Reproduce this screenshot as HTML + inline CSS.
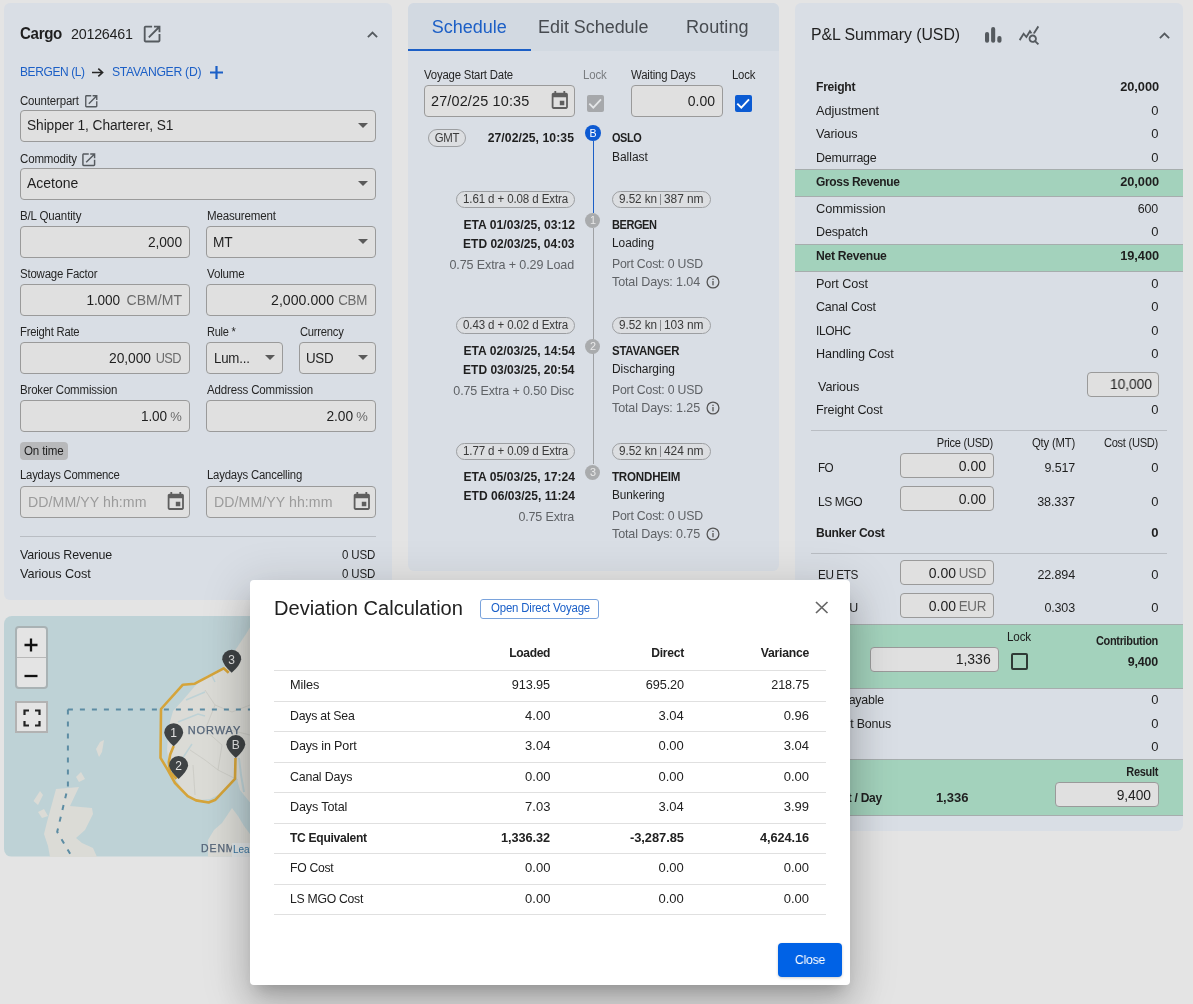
<!DOCTYPE html>
<html><head><meta charset="utf-8"><title>Voyage</title>
<style>
html,body{margin:0;padding:0;}
body{width:1193px;height:1004px;position:relative;overflow:hidden;background:#e4e4e4;font-family:'Liberation Sans', sans-serif;color:#1f1f1f;}
svg{display:block;}
</style></head><body><div style="position:absolute;left:0;top:0;width:1193px;height:1004px;will-change:transform;">
<div style="position:absolute;left:4px;top:3px;width:388px;height:597px;background:#d9dee5;border-radius:6px;"></div>
<div style="position:absolute;left:20px;top:25.50px;height:16px;line-height:16px;white-space:nowrap;font-size:16px;font-weight:700;color:#1f1f1f;letter-spacing:-0.349px;transform:scaleX(0.9440);transform-origin:0 50%;">Cargo</div>
<div style="position:absolute;left:71px;top:26.00px;height:15px;line-height:15px;white-space:nowrap;font-size:15px;font-weight:400;color:#1f1f1f;letter-spacing:-0.258px;transform:scaleX(0.9539);transform-origin:0 50%;">20126461</div>
<svg style="position:absolute;left:141.225px;top:23.225px;" width="22.2" height="22.2" viewBox="0 0 24 24"><path fill="#555a5f" d="M19 19H5V5h7V3H5c-1.11 0-2 .9-2 2v14c0 1.1.89 2 2 2h14c1.1 0 2-.9 2-2v-7h-2v7zM14 3v2h3.59l-9.83 9.83 1.41 1.41L19 6.41V10h2V3h-7z"/></svg>
<svg style="position:absolute;left:367px;top:31px;" width="11" height="7" viewBox="0 0 11 7"><path d="M0.9 6.2 L5.5 1.6 L10.1 6.2" fill="none" stroke="#555a5f" stroke-width="1.8"/></svg>
<div style="position:absolute;left:20px;top:65.30px;height:13px;line-height:13px;white-space:nowrap;font-size:13px;font-weight:400;color:#1c5fc6;letter-spacing:-0.405px;transform:scaleX(0.9196);transform-origin:0 50%;">BERGEN (L)</div>
<svg style="position:absolute;left:92px;top:68.4px;" width="12" height="9" viewBox="0 0 12 9"><path d="M0 4.5 H10.5 M6.3 0.6 L10.6 4.5 L6.3 8.4" fill="none" stroke="#262626" stroke-width="1.6"/></svg>
<div style="position:absolute;left:111.5px;top:64.80px;height:13px;line-height:13px;white-space:nowrap;font-size:13px;font-weight:400;color:#1c5fc6;letter-spacing:-0.309px;transform:scaleX(0.9396);transform-origin:0 50%;">STAVANGER (D)</div>
<svg style="position:absolute;left:209.8px;top:66.4px;" width="13" height="13" viewBox="0 0 13 13"><path d="M6.5 0 V13 M0 6.5 H13" stroke="#1c5fc6" stroke-width="2.2"/></svg>
<div style="position:absolute;left:20px;top:94.80px;height:12px;line-height:12px;white-space:nowrap;font-size:12px;font-weight:400;color:#262626;letter-spacing:-0.170px;transform:scaleX(0.9560);transform-origin:0 50%;">Counterpart</div>
<svg style="position:absolute;left:82.9375px;top:92.5375px;" width="16.5" height="16.5" viewBox="0 0 24 24"><path fill="#555a5f" d="M19 19H5V5h7V3H5c-1.11 0-2 .9-2 2v14c0 1.1.89 2 2 2h14c1.1 0 2-.9 2-2v-7h-2v7zM14 3v2h3.59l-9.83 9.83 1.41 1.41L19 6.41V10h2V3h-7z"/></svg>
<div style="position:absolute;left:20px;top:110px;width:356px;height:32px;background:#e0e0e0;border:1px solid #9a9a9a;border-radius:4px;box-sizing:border-box;"></div>
<div style="position:absolute;left:27.2px;top:118.40px;height:14px;line-height:14px;white-space:nowrap;font-size:14px;font-weight:400;color:#1f1f1f;letter-spacing:-0.079px;transform:scaleX(0.9813);transform-origin:0 50%;">Shipper 1, Charterer, S1</div>
<svg style="position:absolute;left:358px;top:123px;" width="10" height="5" viewBox="0 0 10 5"><path d="M0 0 L10 0 L5 5 Z" fill="#5a5a5a"/></svg>
<div style="position:absolute;left:20px;top:152.90px;height:12px;line-height:12px;white-space:nowrap;font-size:12px;font-weight:400;color:#262626;letter-spacing:-0.176px;transform:scaleX(0.9611);transform-origin:0 50%;">Commodity</div>
<svg style="position:absolute;left:80.4125px;top:150.8125px;" width="17.5" height="17.5" viewBox="0 0 24 24"><path fill="#555a5f" d="M19 19H5V5h7V3H5c-1.11 0-2 .9-2 2v14c0 1.1.89 2 2 2h14c1.1 0 2-.9 2-2v-7h-2v7zM14 3v2h3.59l-9.83 9.83 1.41 1.41L19 6.41V10h2V3h-7z"/></svg>
<div style="position:absolute;left:20px;top:168px;width:356px;height:32px;background:#e0e0e0;border:1px solid #9a9a9a;border-radius:4px;box-sizing:border-box;"></div>
<div style="position:absolute;left:27px;top:176.00px;height:14px;line-height:14px;white-space:nowrap;font-size:14px;font-weight:400;color:#1f1f1f;">Acetone</div>
<svg style="position:absolute;left:358px;top:181px;" width="10" height="5" viewBox="0 0 10 5"><path d="M0 0 L10 0 L5 5 Z" fill="#5a5a5a"/></svg>
<div style="position:absolute;left:20px;top:209.70px;height:12px;line-height:12px;white-space:nowrap;font-size:12px;font-weight:400;color:#262626;letter-spacing:-0.146px;transform:scaleX(0.9602);transform-origin:0 50%;">B/L Quantity</div>
<div style="position:absolute;left:206.5px;top:209.70px;height:12px;line-height:12px;white-space:nowrap;font-size:12px;font-weight:400;color:#262626;letter-spacing:-0.170px;transform:scaleX(0.9621);transform-origin:0 50%;">Measurement</div>
<div style="position:absolute;left:20px;top:226px;width:170px;height:32px;background:#e0e0e0;border:1px solid #9a9a9a;border-radius:4px;box-sizing:border-box;"></div>
<div style="position:absolute;left:-818.08px;width:1000px;text-align:right;top:234.60px;height:14px;line-height:14px;white-space:nowrap;font-size:14px;font-weight:400;color:#1f1f1f;letter-spacing:-0.085px;transform:scaleX(0.9820);transform-origin:100% 50%;">2,000</div>
<div style="position:absolute;left:206px;top:226px;width:170px;height:32px;background:#e0e0e0;border:1px solid #9a9a9a;border-radius:4px;box-sizing:border-box;"></div>
<div style="position:absolute;left:213px;top:234.60px;height:14px;line-height:14px;white-space:nowrap;font-size:14px;font-weight:400;color:#1f1f1f;letter-spacing:-0.145px;transform:scaleX(0.9785);transform-origin:0 50%;">MT</div>
<svg style="position:absolute;left:358px;top:239px;" width="10" height="5" viewBox="0 0 10 5"><path d="M0 0 L10 0 L5 5 Z" fill="#5a5a5a"/></svg>
<div style="position:absolute;left:20px;top:268.00px;height:12px;line-height:12px;white-space:nowrap;font-size:12px;font-weight:400;color:#262626;letter-spacing:-0.195px;transform:scaleX(0.9518);transform-origin:0 50%;">Stowage Factor</div>
<div style="position:absolute;left:206.5px;top:268.00px;height:12px;line-height:12px;white-space:nowrap;font-size:12px;font-weight:400;color:#262626;letter-spacing:-0.165px;transform:scaleX(0.9631);transform-origin:0 50%;">Volume</div>
<div style="position:absolute;left:20px;top:284px;width:170px;height:32px;background:#e0e0e0;border:1px solid #9a9a9a;border-radius:4px;box-sizing:border-box;"></div>
<div style="position:absolute;left:-817.98px;width:1000px;text-align:right;top:292.50px;height:14px;line-height:14px;white-space:nowrap;font-size:14px;font-weight:400;color:#6b6b6b;letter-spacing:0.019px;transform:scaleX(1.0031);transform-origin:100% 50%;">CBM/MT</div>
<div style="position:absolute;left:-879.93px;width:1000px;text-align:right;top:292.50px;height:14px;line-height:14px;white-space:nowrap;font-size:14px;font-weight:400;color:#1f1f1f;letter-spacing:-0.125px;transform:scaleX(0.9733);transform-origin:100% 50%;">1.000</div>
<div style="position:absolute;left:206px;top:284px;width:170px;height:32px;background:#e0e0e0;border:1px solid #9a9a9a;border-radius:4px;box-sizing:border-box;"></div>
<div style="position:absolute;left:-632.52px;width:1000px;text-align:right;top:292.50px;height:14px;line-height:14px;white-space:nowrap;font-size:14px;font-weight:400;color:#6b6b6b;letter-spacing:-0.317px;transform:scaleX(0.9545);transform-origin:100% 50%;">CBM</div>
<div style="position:absolute;left:-665.97px;width:1000px;text-align:right;top:292.50px;height:14px;line-height:14px;white-space:nowrap;font-size:14px;font-weight:400;color:#1f1f1f;letter-spacing:0.031px;transform:scaleX(1.0068);transform-origin:100% 50%;">2,000.000</div>
<div style="position:absolute;left:20px;top:326.00px;height:12px;line-height:12px;white-space:nowrap;font-size:12px;font-weight:400;color:#262626;letter-spacing:-0.228px;transform:scaleX(0.9385);transform-origin:0 50%;">Freight Rate</div>
<div style="position:absolute;left:206.5px;top:326.00px;height:12px;line-height:12px;white-space:nowrap;font-size:12px;font-weight:400;color:#262626;letter-spacing:-0.291px;transform:scaleX(0.9210);transform-origin:0 50%;">Rule *</div>
<div style="position:absolute;left:299.5px;top:326.00px;height:12px;line-height:12px;white-space:nowrap;font-size:12px;font-weight:400;color:#262626;letter-spacing:-0.263px;transform:scaleX(0.9359);transform-origin:0 50%;">Currency</div>
<div style="position:absolute;left:20px;top:342px;width:170px;height:32px;background:#e0e0e0;border:1px solid #9a9a9a;border-radius:4px;box-sizing:border-box;"></div>
<div style="position:absolute;left:-818.90px;width:1000px;text-align:right;top:350.50px;height:14px;line-height:14px;white-space:nowrap;font-size:14px;font-weight:400;color:#6b6b6b;letter-spacing:-0.595px;transform:scaleX(0.9108);transform-origin:100% 50%;">USD</div>
<div style="position:absolute;left:-849.06px;width:1000px;text-align:right;top:350.50px;height:14px;line-height:14px;white-space:nowrap;font-size:14px;font-weight:400;color:#1f1f1f;letter-spacing:-0.056px;transform:scaleX(0.9884);transform-origin:100% 50%;">20,000</div>
<div style="position:absolute;left:206px;top:342px;width:77px;height:32px;background:#e0e0e0;border:1px solid #9a9a9a;border-radius:4px;box-sizing:border-box;"></div>
<div style="position:absolute;left:213.5px;top:350.50px;height:14px;line-height:14px;white-space:nowrap;font-size:14px;font-weight:400;color:#1f1f1f;letter-spacing:-0.219px;transform:scaleX(0.9497);transform-origin:0 50%;">Lum...</div>
<svg style="position:absolute;left:265px;top:355px;" width="10" height="5" viewBox="0 0 10 5"><path d="M0 0 L10 0 L5 5 Z" fill="#5a5a5a"/></svg>
<div style="position:absolute;left:299px;top:342px;width:77px;height:32px;background:#e0e0e0;border:1px solid #9a9a9a;border-radius:4px;box-sizing:border-box;"></div>
<div style="position:absolute;left:306px;top:350.50px;height:14px;line-height:14px;white-space:nowrap;font-size:14px;font-weight:400;color:#1f1f1f;letter-spacing:-0.303px;transform:scaleX(0.9543);transform-origin:0 50%;">USD</div>
<svg style="position:absolute;left:358px;top:355px;" width="10" height="5" viewBox="0 0 10 5"><path d="M0 0 L10 0 L5 5 Z" fill="#5a5a5a"/></svg>
<div style="position:absolute;left:20px;top:384.00px;height:12px;line-height:12px;white-space:nowrap;font-size:12px;font-weight:400;color:#262626;letter-spacing:-0.180px;transform:scaleX(0.9564);transform-origin:0 50%;">Broker Commission</div>
<div style="position:absolute;left:206.5px;top:384.00px;height:12px;line-height:12px;white-space:nowrap;font-size:12px;font-weight:400;color:#262626;letter-spacing:-0.167px;transform:scaleX(0.9604);transform-origin:0 50%;">Address Commission</div>
<div style="position:absolute;left:20px;top:400px;width:170px;height:32px;background:#e0e0e0;border:1px solid #9a9a9a;border-radius:4px;box-sizing:border-box;"></div>
<div style="position:absolute;left:-818.30px;width:1000px;text-align:right;top:409.50px;height:13px;line-height:13px;white-space:nowrap;font-size:13px;font-weight:400;color:#6b6b6b;">%</div>
<div style="position:absolute;left:-832.73px;width:1000px;text-align:right;top:408.50px;height:14px;line-height:14px;white-space:nowrap;font-size:14px;font-weight:400;color:#1f1f1f;letter-spacing:-0.127px;transform:scaleX(0.9722);transform-origin:100% 50%;">1.00</div>
<div style="position:absolute;left:206px;top:400px;width:170px;height:32px;background:#e0e0e0;border:1px solid #9a9a9a;border-radius:4px;box-sizing:border-box;"></div>
<div style="position:absolute;left:-632.20px;width:1000px;text-align:right;top:409.50px;height:13px;line-height:13px;white-space:nowrap;font-size:13px;font-weight:400;color:#6b6b6b;">%</div>
<div style="position:absolute;left:-646.78px;width:1000px;text-align:right;top:408.50px;height:14px;line-height:14px;white-space:nowrap;font-size:14px;font-weight:400;color:#1f1f1f;letter-spacing:-0.076px;transform:scaleX(0.9834);transform-origin:100% 50%;">2.00</div>
<div style="position:absolute;left:20px;top:442px;width:48px;height:18px;background:#b8b9bb;border-radius:4px;"></div>
<div style="position:absolute;left:24px;top:445.00px;height:12px;line-height:12px;white-space:nowrap;font-size:12px;font-weight:400;color:#1f1f1f;letter-spacing:-0.146px;transform:scaleX(0.9636);transform-origin:0 50%;">On time</div>
<div style="position:absolute;left:20px;top:469.40px;height:12px;line-height:12px;white-space:nowrap;font-size:12px;font-weight:400;color:#262626;letter-spacing:-0.252px;transform:scaleX(0.9453);transform-origin:0 50%;">Laydays Commence</div>
<div style="position:absolute;left:206.5px;top:469.40px;height:12px;line-height:12px;white-space:nowrap;font-size:12px;font-weight:400;color:#262626;letter-spacing:-0.207px;transform:scaleX(0.9468);transform-origin:0 50%;">Laydays Cancelling</div>
<div style="position:absolute;left:20px;top:486px;width:170px;height:32px;background:#e0e0e0;border:1px solid #9a9a9a;border-radius:4px;box-sizing:border-box;"></div>
<div style="position:absolute;left:27.5px;top:495.00px;height:14px;line-height:14px;white-space:nowrap;font-size:14px;font-weight:400;color:#9b9b9b;letter-spacing:0.059px;transform:scaleX(1.0106);transform-origin:0 50%;">DD/MM/YY hh:mm</div>
<svg style="position:absolute;left:164.70000000000002px;top:491.40000000000003px;" width="21.6" height="21.6" viewBox="0 0 24 24"><path fill="#5f5f5f" d="M17 12h-5v5h5v-5zM16 1v2H8V1H6v2H5c-1.11 0-1.99.9-1.99 2L3 19c0 1.1.89 2 2 2h14c1.1 0 2-.9 2-2V5c0-1.1-.9-2-2-2h-1V1h-2zm3 18H5V8h14v11z"/></svg>
<div style="position:absolute;left:206px;top:486px;width:170px;height:32px;background:#e0e0e0;border:1px solid #9a9a9a;border-radius:4px;box-sizing:border-box;"></div>
<div style="position:absolute;left:213.5px;top:495.00px;height:14px;line-height:14px;white-space:nowrap;font-size:14px;font-weight:400;color:#9b9b9b;letter-spacing:0.059px;transform:scaleX(1.0106);transform-origin:0 50%;">DD/MM/YY hh:mm</div>
<svg style="position:absolute;left:350.7px;top:491.40000000000003px;" width="21.6" height="21.6" viewBox="0 0 24 24"><path fill="#5f5f5f" d="M17 12h-5v5h5v-5zM16 1v2H8V1H6v2H5c-1.11 0-1.99.9-1.99 2L3 19c0 1.1.89 2 2 2h14c1.1 0 2-.9 2-2V5c0-1.1-.9-2-2-2h-1V1h-2zm3 18H5V8h14v11z"/></svg>
<div style="position:absolute;left:20px;top:536px;width:356px;height:1px;background:#b9bdc3;"></div>
<div style="position:absolute;left:20px;top:547.80px;height:13px;line-height:13px;white-space:nowrap;font-size:13px;font-weight:400;color:#1f1f1f;letter-spacing:-0.184px;transform:scaleX(0.9583);transform-origin:0 50%;">Various Revenue</div>
<div style="position:absolute;left:-625.20px;width:1000px;text-align:right;top:548.80px;height:12px;line-height:12px;white-space:nowrap;font-size:12px;font-weight:400;color:#1f1f1f;letter-spacing:-0.200px;transform:scaleX(0.9579);transform-origin:100% 50%;">0 USD</div>
<div style="position:absolute;left:20px;top:566.60px;height:13px;line-height:13px;white-space:nowrap;font-size:13px;font-weight:400;color:#1f1f1f;letter-spacing:-0.090px;transform:scaleX(0.9780);transform-origin:0 50%;">Various Cost</div>
<div style="position:absolute;left:-625.20px;width:1000px;text-align:right;top:567.60px;height:12px;line-height:12px;white-space:nowrap;font-size:12px;font-weight:400;color:#1f1f1f;letter-spacing:-0.200px;transform:scaleX(0.9579);transform-origin:100% 50%;">0 USD</div>
<div style="position:absolute;left:408px;top:3px;width:371px;height:568px;background:#d9dee5;border-radius:6px;"></div>
<div style="position:absolute;left:408px;top:3px;width:371px;height:48px;background:#d2d9e1;border-radius:6px 6px 0 0;"></div>
<div style="position:absolute;left:408px;top:49px;width:123px;height:2px;background:#1c5fc6;"></div>
<div style="position:absolute;left:431.7px;top:17.70px;height:18px;line-height:18px;white-space:nowrap;font-size:18px;font-weight:400;color:#1c5fc6;">Schedule</div>
<div style="position:absolute;left:538px;top:17.70px;height:18px;line-height:18px;white-space:nowrap;font-size:18px;font-weight:400;color:#474b50;letter-spacing:-0.018px;transform:scaleX(0.9969);transform-origin:0 50%;">Edit Schedule</div>
<div style="position:absolute;left:686px;top:17.70px;height:18px;line-height:18px;white-space:nowrap;font-size:18px;font-weight:400;color:#474b50;letter-spacing:0.032px;transform:scaleX(1.0053);transform-origin:0 50%;">Routing</div>
<div style="position:absolute;left:424.2px;top:68.80px;height:12px;line-height:12px;white-space:nowrap;font-size:12px;font-weight:400;color:#262626;letter-spacing:-0.203px;transform:scaleX(0.9473);transform-origin:0 50%;">Voyage Start Date</div>
<div style="position:absolute;left:583px;top:68.80px;height:12px;line-height:12px;white-space:nowrap;font-size:12px;font-weight:400;color:#7a7d80;letter-spacing:-0.190px;transform:scaleX(0.9553);transform-origin:0 50%;">Lock</div>
<div style="position:absolute;left:630.9px;top:68.50px;height:12px;line-height:12px;white-space:nowrap;font-size:12px;font-weight:400;color:#262626;letter-spacing:-0.197px;transform:scaleX(0.9501);transform-origin:0 50%;">Waiting Days</div>
<div style="position:absolute;left:731.6px;top:68.50px;height:12px;line-height:12px;white-space:nowrap;font-size:12px;font-weight:400;color:#262626;letter-spacing:-0.232px;transform:scaleX(0.9455);transform-origin:0 50%;">Lock</div>
<div style="position:absolute;left:424px;top:85px;width:151px;height:32px;background:#e0e0e0;border:1px solid #9a9a9a;border-radius:4px;box-sizing:border-box;"></div>
<div style="position:absolute;left:430.6px;top:94.10px;height:14px;line-height:14px;white-space:nowrap;font-size:14px;font-weight:400;color:#1f1f1f;letter-spacing:0.140px;transform:scaleX(1.0316);transform-origin:0 50%;">27/02/25 10:35</div>
<svg style="position:absolute;left:549.3px;top:90.1px;" width="21.6" height="21.6" viewBox="0 0 24 24"><path fill="#5f5f5f" d="M17 12h-5v5h5v-5zM16 1v2H8V1H6v2H5c-1.11 0-1.99.9-1.99 2L3 19c0 1.1.89 2 2 2h14c1.1 0 2-.9 2-2V5c0-1.1-.9-2-2-2h-1V1h-2zm3 18H5V8h14v11z"/></svg>
<div style="position:absolute;left:587px;top:95px;width:16.5px;height:16.5px;background:#a6a8ab;border-radius:2px;"></div>
<svg style="position:absolute;left:587px;top:95px;" width="17" height="17" viewBox="0 0 17 17"><path d="M2.3 8.6 L6.3 12.6 L14 4.4" fill="none" stroke="#e4e6e8" stroke-width="1.8"/></svg>
<div style="position:absolute;left:631px;top:85px;width:92px;height:32px;background:#e0e0e0;border:1px solid #9a9a9a;border-radius:4px;box-sizing:border-box;"></div>
<div style="position:absolute;left:-285.00px;width:1000px;text-align:right;top:94.10px;height:14px;line-height:14px;white-space:nowrap;font-size:14px;font-weight:400;color:#1f1f1f;">0.00</div>
<div style="position:absolute;left:734.5px;top:95px;width:17px;height:17px;background:#0b5bd3;border-radius:2px;"></div>
<svg style="position:absolute;left:734.5px;top:95px;" width="17" height="17" viewBox="0 0 17 17"><path d="M2.3 8.6 L6.3 12.6 L14 4.4" fill="none" stroke="#ffffff" stroke-width="1.9"/></svg>
<div style="position:absolute;left:428px;top:129px;width:38px;height:18px;border:1px solid #9c9ea1;border-radius:9px;box-sizing:border-box;background:#dcdee1;"></div>
<div style="position:absolute;left:-53.00px;width:1000px;text-align:center;top:132.30px;height:12px;line-height:12px;white-space:nowrap;font-size:12px;font-weight:400;color:#3a3a3a;letter-spacing:-0.297px;transform:scaleX(0.9503);transform-origin:50% 50%;">GMT</div>
<div style="position:absolute;left:-425.64px;width:1000px;text-align:right;top:131.80px;height:12px;line-height:12px;white-space:nowrap;font-size:12px;font-weight:700;color:#1f1f1f;letter-spacing:0.059px;transform:scaleX(1.0158);transform-origin:100% 50%;">27/02/25, 10:35</div>
<div style="position:absolute;left:593px;top:141px;width:1px;height:72px;background:#1c5fc6;"></div>
<div style="position:absolute;left:593px;top:228px;width:1px;height:236px;background:#9fa1a4;"></div>
<svg style="position:absolute;left:585px;top:125px;" width="16" height="16" viewBox="0 0 16 16"><circle cx="8" cy="8" r="8" fill="#0d5ad2"/></svg>
<div style="position:absolute;left:93.20px;width:1000px;text-align:center;top:128.10px;height:11px;line-height:11px;white-space:nowrap;font-size:11px;font-weight:400;color:#ffffff;letter-spacing:-0.139px;transform:scaleX(0.9716);transform-origin:50% 50%;">B</div>
<div style="position:absolute;left:611.9px;top:131.80px;height:12px;line-height:12px;white-space:nowrap;font-size:12px;font-weight:700;color:#1f1f1f;letter-spacing:-0.504px;transform:scaleX(0.9125);transform-origin:0 50%;">OSLO</div>
<div style="position:absolute;left:611.9px;top:150.50px;height:12px;line-height:12px;white-space:nowrap;font-size:12px;font-weight:400;color:#1f1f1f;">Ballast</div>
<div style="position:absolute;left:455.6px;top:190.6px;width:119px;height:17px;border:1px solid #9c9ea1;border-radius:9px;box-sizing:border-box;background:#dcdee1;"></div>
<div style="position:absolute;left:462.6px;top:193.10px;height:12px;line-height:12px;white-space:nowrap;font-size:12px;font-weight:400;color:#3a3a3a;letter-spacing:-0.131px;transform:scaleX(0.9633);transform-origin:0 50%;">1.61 d + 0.08 d Extra</div>
<div style="position:absolute;left:612px;top:190.6px;width:98.5px;height:17px;border:1px solid #9c9ea1;border-radius:9px;box-sizing:border-box;background:#dcdee1;"></div>
<div style="position:absolute;left:618.5px;top:193.10px;height:12px;line-height:12px;white-space:nowrap;font-size:12px;font-weight:400;color:#3a3a3a;letter-spacing:-0.079px;transform:scaleX(0.9789);transform-origin:0 50%;">9.52 kn</div>
<div style="position:absolute;left:660.2px;top:193.5px;width:1px;height:11px;background:#8a8c8f;"></div>
<div style="position:absolute;left:664px;top:193.10px;height:12px;line-height:12px;white-space:nowrap;font-size:12px;font-weight:400;color:#3a3a3a;letter-spacing:-0.036px;transform:scaleX(0.9920);transform-origin:0 50%;">387 nm</div>
<svg style="position:absolute;left:585.4px;top:212.7px;" width="15" height="15" viewBox="0 0 15 15"><circle cx="7.5" cy="7.5" r="7.5" fill="#a9abad"/></svg>
<div style="position:absolute;left:93.00px;width:1000px;text-align:center;top:215.00px;height:11px;line-height:11px;white-space:nowrap;font-size:11px;font-weight:400;color:#e8e8e8;letter-spacing:-0.050px;transform:scaleX(0.9877);transform-origin:50% 50%;">1</div>
<div style="position:absolute;left:-425.47px;width:1000px;text-align:right;top:219.00px;height:12px;line-height:12px;white-space:nowrap;font-size:12px;font-weight:700;color:#1f1f1f;letter-spacing:0.030px;transform:scaleX(1.0077);transform-origin:100% 50%;">ETA 01/03/25, 03:12</div>
<div style="position:absolute;left:-425.50px;width:1000px;text-align:right;top:238.00px;height:12px;line-height:12px;white-space:nowrap;font-size:12px;font-weight:700;color:#1f1f1f;">ETD 02/03/25, 04:03</div>
<div style="position:absolute;left:-425.64px;width:1000px;text-align:right;top:257.50px;height:13px;line-height:13px;white-space:nowrap;font-size:13px;font-weight:400;color:#5f6266;letter-spacing:-0.137px;transform:scaleX(0.9659);transform-origin:100% 50%;">0.75 Extra + 0.29 Load</div>
<div style="position:absolute;left:612.2px;top:219.00px;height:12px;line-height:12px;white-space:nowrap;font-size:12px;font-weight:700;color:#1f1f1f;letter-spacing:-0.476px;transform:scaleX(0.9177);transform-origin:0 50%;">BERGEN</div>
<div style="position:absolute;left:612.2px;top:237.00px;height:12px;line-height:12px;white-space:nowrap;font-size:12px;font-weight:400;color:#1f1f1f;letter-spacing:-0.041px;transform:scaleX(0.9899);transform-origin:0 50%;">Loading</div>
<div style="position:absolute;left:612px;top:256.50px;height:13px;line-height:13px;white-space:nowrap;font-size:13px;font-weight:400;color:#5f6266;letter-spacing:-0.229px;transform:scaleX(0.9454);transform-origin:0 50%;">Port Cost: 0 USD</div>
<div style="position:absolute;left:612px;top:274.50px;height:13px;line-height:13px;white-space:nowrap;font-size:13px;font-weight:400;color:#5f6266;letter-spacing:-0.133px;transform:scaleX(0.9660);transform-origin:0 50%;">Total Days: 1.04</div>
<svg style="position:absolute;left:705.6px;top:274.8px;" width="14" height="14" viewBox="0 0 14 14"><circle cx="7" cy="7" r="5.9" fill="none" stroke="#555" stroke-width="1.3"/><rect x="6.35" y="6" width="1.3" height="4.3" fill="#555"/><rect x="6.35" y="3.7" width="1.3" height="1.3" fill="#555"/></svg>
<div style="position:absolute;left:455.6px;top:316.6px;width:119px;height:17px;border:1px solid #9c9ea1;border-radius:9px;box-sizing:border-box;background:#dcdee1;"></div>
<div style="position:absolute;left:462.6px;top:319.10px;height:12px;line-height:12px;white-space:nowrap;font-size:12px;font-weight:400;color:#3a3a3a;letter-spacing:-0.131px;transform:scaleX(0.9633);transform-origin:0 50%;">0.43 d + 0.02 d Extra</div>
<div style="position:absolute;left:612px;top:316.6px;width:98.5px;height:17px;border:1px solid #9c9ea1;border-radius:9px;box-sizing:border-box;background:#dcdee1;"></div>
<div style="position:absolute;left:618.5px;top:319.10px;height:12px;line-height:12px;white-space:nowrap;font-size:12px;font-weight:400;color:#3a3a3a;letter-spacing:-0.079px;transform:scaleX(0.9789);transform-origin:0 50%;">9.52 kn</div>
<div style="position:absolute;left:660.2px;top:319.5px;width:1px;height:11px;background:#8a8c8f;"></div>
<div style="position:absolute;left:664px;top:319.10px;height:12px;line-height:12px;white-space:nowrap;font-size:12px;font-weight:400;color:#3a3a3a;letter-spacing:-0.036px;transform:scaleX(0.9920);transform-origin:0 50%;">103 nm</div>
<svg style="position:absolute;left:585.4px;top:338.7px;" width="15" height="15" viewBox="0 0 15 15"><circle cx="7.5" cy="7.5" r="7.5" fill="#a9abad"/></svg>
<div style="position:absolute;left:93.00px;width:1000px;text-align:center;top:341.00px;height:11px;line-height:11px;white-space:nowrap;font-size:11px;font-weight:400;color:#e8e8e8;letter-spacing:-0.050px;transform:scaleX(0.9877);transform-origin:50% 50%;">2</div>
<div style="position:absolute;left:-425.47px;width:1000px;text-align:right;top:345.00px;height:12px;line-height:12px;white-space:nowrap;font-size:12px;font-weight:700;color:#1f1f1f;letter-spacing:0.030px;transform:scaleX(1.0077);transform-origin:100% 50%;">ETA 02/03/25, 14:54</div>
<div style="position:absolute;left:-425.50px;width:1000px;text-align:right;top:364.00px;height:12px;line-height:12px;white-space:nowrap;font-size:12px;font-weight:700;color:#1f1f1f;">ETD 03/03/25, 20:54</div>
<div style="position:absolute;left:-425.64px;width:1000px;text-align:right;top:383.50px;height:13px;line-height:13px;white-space:nowrap;font-size:13px;font-weight:400;color:#5f6266;letter-spacing:-0.140px;transform:scaleX(0.9642);transform-origin:100% 50%;">0.75 Extra + 0.50 Disc</div>
<div style="position:absolute;left:612.2px;top:345.00px;height:12px;line-height:12px;white-space:nowrap;font-size:12px;font-weight:700;color:#1f1f1f;letter-spacing:-0.249px;transform:scaleX(0.9541);transform-origin:0 50%;">STAVANGER</div>
<div style="position:absolute;left:612.2px;top:363.00px;height:12px;line-height:12px;white-space:nowrap;font-size:12px;font-weight:400;color:#1f1f1f;letter-spacing:-0.017px;transform:scaleX(0.9955);transform-origin:0 50%;">Discharging</div>
<div style="position:absolute;left:612px;top:382.50px;height:13px;line-height:13px;white-space:nowrap;font-size:13px;font-weight:400;color:#5f6266;letter-spacing:-0.229px;transform:scaleX(0.9454);transform-origin:0 50%;">Port Cost: 0 USD</div>
<div style="position:absolute;left:612px;top:400.50px;height:13px;line-height:13px;white-space:nowrap;font-size:13px;font-weight:400;color:#5f6266;letter-spacing:-0.133px;transform:scaleX(0.9660);transform-origin:0 50%;">Total Days: 1.25</div>
<svg style="position:absolute;left:705.6px;top:400.8px;" width="14" height="14" viewBox="0 0 14 14"><circle cx="7" cy="7" r="5.9" fill="none" stroke="#555" stroke-width="1.3"/><rect x="6.35" y="6" width="1.3" height="4.3" fill="#555"/><rect x="6.35" y="3.7" width="1.3" height="1.3" fill="#555"/></svg>
<div style="position:absolute;left:455.6px;top:442.6px;width:119px;height:17px;border:1px solid #9c9ea1;border-radius:9px;box-sizing:border-box;background:#dcdee1;"></div>
<div style="position:absolute;left:462.6px;top:445.10px;height:12px;line-height:12px;white-space:nowrap;font-size:12px;font-weight:400;color:#3a3a3a;letter-spacing:-0.131px;transform:scaleX(0.9633);transform-origin:0 50%;">1.77 d + 0.09 d Extra</div>
<div style="position:absolute;left:612px;top:442.6px;width:98.5px;height:17px;border:1px solid #9c9ea1;border-radius:9px;box-sizing:border-box;background:#dcdee1;"></div>
<div style="position:absolute;left:618.5px;top:445.10px;height:12px;line-height:12px;white-space:nowrap;font-size:12px;font-weight:400;color:#3a3a3a;letter-spacing:-0.079px;transform:scaleX(0.9789);transform-origin:0 50%;">9.52 kn</div>
<div style="position:absolute;left:660.2px;top:445.5px;width:1px;height:11px;background:#8a8c8f;"></div>
<div style="position:absolute;left:664px;top:445.10px;height:12px;line-height:12px;white-space:nowrap;font-size:12px;font-weight:400;color:#3a3a3a;letter-spacing:-0.036px;transform:scaleX(0.9920);transform-origin:0 50%;">424 nm</div>
<svg style="position:absolute;left:585.4px;top:464.7px;" width="15" height="15" viewBox="0 0 15 15"><circle cx="7.5" cy="7.5" r="7.5" fill="#a9abad"/></svg>
<div style="position:absolute;left:93.00px;width:1000px;text-align:center;top:467.00px;height:11px;line-height:11px;white-space:nowrap;font-size:11px;font-weight:400;color:#e8e8e8;letter-spacing:-0.050px;transform:scaleX(0.9877);transform-origin:50% 50%;">3</div>
<div style="position:absolute;left:-425.47px;width:1000px;text-align:right;top:471.00px;height:12px;line-height:12px;white-space:nowrap;font-size:12px;font-weight:700;color:#1f1f1f;letter-spacing:0.030px;transform:scaleX(1.0077);transform-origin:100% 50%;">ETA 05/03/25, 17:24</div>
<div style="position:absolute;left:-425.48px;width:1000px;text-align:right;top:490.00px;height:12px;line-height:12px;white-space:nowrap;font-size:12px;font-weight:700;color:#1f1f1f;letter-spacing:0.016px;transform:scaleX(1.0041);transform-origin:100% 50%;">ETD 06/03/25, 11:24</div>
<div style="position:absolute;left:-425.65px;width:1000px;text-align:right;top:509.50px;height:13px;line-height:13px;white-space:nowrap;font-size:13px;font-weight:400;color:#5f6266;letter-spacing:-0.149px;transform:scaleX(0.9624);transform-origin:100% 50%;">0.75 Extra</div>
<div style="position:absolute;left:612.2px;top:471.00px;height:12px;line-height:12px;white-space:nowrap;font-size:12px;font-weight:700;color:#1f1f1f;letter-spacing:-0.198px;transform:scaleX(0.9635);transform-origin:0 50%;">TRONDHEIM</div>
<div style="position:absolute;left:612.2px;top:489.00px;height:12px;line-height:12px;white-space:nowrap;font-size:12px;font-weight:400;color:#1f1f1f;letter-spacing:-0.065px;transform:scaleX(0.9839);transform-origin:0 50%;">Bunkering</div>
<div style="position:absolute;left:612px;top:508.50px;height:13px;line-height:13px;white-space:nowrap;font-size:13px;font-weight:400;color:#5f6266;letter-spacing:-0.229px;transform:scaleX(0.9454);transform-origin:0 50%;">Port Cost: 0 USD</div>
<div style="position:absolute;left:612px;top:526.50px;height:13px;line-height:13px;white-space:nowrap;font-size:13px;font-weight:400;color:#5f6266;letter-spacing:-0.133px;transform:scaleX(0.9660);transform-origin:0 50%;">Total Days: 0.75</div>
<svg style="position:absolute;left:705.6px;top:526.8px;" width="14" height="14" viewBox="0 0 14 14"><circle cx="7" cy="7" r="5.9" fill="none" stroke="#555" stroke-width="1.3"/><rect x="6.35" y="6" width="1.3" height="4.3" fill="#555"/><rect x="6.35" y="3.7" width="1.3" height="1.3" fill="#555"/></svg>
<div style="position:absolute;left:795px;top:3px;width:388px;height:828px;background:#d9dee5;border-radius:6px;"></div>
<div style="position:absolute;left:811.4px;top:27.00px;height:16px;line-height:16px;white-space:nowrap;font-size:16px;font-weight:400;color:#1f1f1f;letter-spacing:-0.058px;transform:scaleX(0.9903);transform-origin:0 50%;">P&amp;L Summary (USD)</div>
<svg style="position:absolute;left:985px;top:27px;" width="17" height="16" viewBox="0 0 17 16"><rect x="0" y="5" width="4.1" height="10.8" rx="2" fill="#555a5f"/><rect x="6.1" y="0" width="4.1" height="15.8" rx="2" fill="#555a5f"/><rect x="12.3" y="9" width="4.2" height="6.8" rx="2" fill="#555a5f"/></svg>
<svg style="position:absolute;left:1018.4px;top:23.9px;" width="22" height="22" viewBox="0 0 24 24"><path fill="#555a5f" d="M19.88 18.47c.44-.7.7-1.51.7-2.39 0-2.49-2.01-4.5-4.5-4.5s-4.5 2.01-4.5 4.5 2.01 4.5 4.49 4.5c.88 0 1.7-.26 2.39-.7L21.58 23 23 21.58l-3.12-3.11zm-3.8.11c-1.38 0-2.5-1.120-2.5-2.5s1.12-2.5 2.5-2.5 2.5 1.12 2.5 2.5-1.12 2.5-2.5 2.5zm-.36-8.5c-.74.02-1.45.18-2.1.45l-.55-.83-3.8 6.18-3.01-3.52-3.630 5.81L1 17l5-8 3 3.5L13 6l2.72 4.08zm2.59.5c-.64-.28-1.33-.45-2.05-.49L21.38 2 23 3.18l-4.69 7.41z"/></svg>
<svg style="position:absolute;left:1159px;top:32px;" width="11" height="7" viewBox="0 0 11 7"><path d="M0.9 6.2 L5.5 1.6 L10.1 6.2" fill="none" stroke="#555a5f" stroke-width="1.8"/></svg>
<div style="position:absolute;left:815.5px;top:79.50px;height:13px;line-height:13px;white-space:nowrap;font-size:13px;font-weight:700;color:#1f1f1f;letter-spacing:-0.282px;transform:scaleX(0.9337);transform-origin:0 50%;">Freight</div>
<div style="position:absolute;left:158.54px;width:1000px;text-align:right;top:79.50px;height:13px;line-height:13px;white-space:nowrap;font-size:13px;font-weight:700;color:#1f1f1f;letter-spacing:-0.065px;transform:scaleX(0.9854);transform-origin:100% 50%;">20,000</div>
<div style="position:absolute;left:815.5px;top:103.80px;height:13px;line-height:13px;white-space:nowrap;font-size:13px;font-weight:400;color:#1f1f1f;letter-spacing:-0.079px;transform:scaleX(0.9819);transform-origin:0 50%;">Adjustment</div>
<div style="position:absolute;left:158.60px;width:1000px;text-align:right;top:103.80px;height:13px;line-height:13px;white-space:nowrap;font-size:13px;font-weight:400;color:#1f1f1f;">0</div>
<div style="position:absolute;left:815.5px;top:126.70px;height:13px;line-height:13px;white-space:nowrap;font-size:13px;font-weight:400;color:#1f1f1f;letter-spacing:-0.088px;transform:scaleX(0.9786);transform-origin:0 50%;">Various</div>
<div style="position:absolute;left:158.60px;width:1000px;text-align:right;top:126.70px;height:13px;line-height:13px;white-space:nowrap;font-size:13px;font-weight:400;color:#1f1f1f;">0</div>
<div style="position:absolute;left:815.5px;top:150.60px;height:13px;line-height:13px;white-space:nowrap;font-size:13px;font-weight:400;color:#1f1f1f;letter-spacing:-0.201px;transform:scaleX(0.9585);transform-origin:0 50%;">Demurrage</div>
<div style="position:absolute;left:158.60px;width:1000px;text-align:right;top:150.60px;height:13px;line-height:13px;white-space:nowrap;font-size:13px;font-weight:400;color:#1f1f1f;">0</div>
<div style="position:absolute;left:795px;top:168.5px;width:388px;height:28.5px;background:#a3d2bc;border-top:1px solid #a6adad;border-bottom:1px solid #a6adad;box-sizing:border-box;"></div>
<div style="position:absolute;left:815.5px;top:174.50px;height:13px;line-height:13px;white-space:nowrap;font-size:13px;font-weight:700;color:#1f1f1f;letter-spacing:-0.373px;transform:scaleX(0.9246);transform-origin:0 50%;">Gross Revenue</div>
<div style="position:absolute;left:158.54px;width:1000px;text-align:right;top:174.50px;height:13px;line-height:13px;white-space:nowrap;font-size:13px;font-weight:700;color:#1f1f1f;letter-spacing:-0.065px;transform:scaleX(0.9854);transform-origin:100% 50%;">20,000</div>
<div style="position:absolute;left:815.5px;top:202.00px;height:13px;line-height:13px;white-space:nowrap;font-size:13px;font-weight:400;color:#1f1f1f;letter-spacing:-0.081px;transform:scaleX(0.9830);transform-origin:0 50%;">Commission</div>
<div style="position:absolute;left:158.40px;width:1000px;text-align:right;top:202.00px;height:13px;line-height:13px;white-space:nowrap;font-size:13px;font-weight:400;color:#1f1f1f;letter-spacing:-0.205px;transform:scaleX(0.9578);transform-origin:100% 50%;">600</div>
<div style="position:absolute;left:815.5px;top:224.70px;height:13px;line-height:13px;white-space:nowrap;font-size:13px;font-weight:400;color:#1f1f1f;letter-spacing:-0.159px;transform:scaleX(0.9655);transform-origin:0 50%;">Despatch</div>
<div style="position:absolute;left:158.60px;width:1000px;text-align:right;top:224.70px;height:13px;line-height:13px;white-space:nowrap;font-size:13px;font-weight:400;color:#1f1f1f;">0</div>
<div style="position:absolute;left:795px;top:243.5px;width:388px;height:28.5px;background:#a3d2bc;border-top:1px solid #a6adad;border-bottom:1px solid #a6adad;box-sizing:border-box;"></div>
<div style="position:absolute;left:815.5px;top:249.20px;height:13px;line-height:13px;white-space:nowrap;font-size:13px;font-weight:700;color:#1f1f1f;letter-spacing:-0.310px;transform:scaleX(0.9358);transform-origin:0 50%;">Net Revenue</div>
<div style="position:absolute;left:158.54px;width:1000px;text-align:right;top:249.20px;height:13px;line-height:13px;white-space:nowrap;font-size:13px;font-weight:700;color:#1f1f1f;letter-spacing:-0.065px;transform:scaleX(0.9854);transform-origin:100% 50%;">19,400</div>
<div style="position:absolute;left:815.5px;top:276.90px;height:13px;line-height:13px;white-space:nowrap;font-size:13px;font-weight:400;color:#1f1f1f;letter-spacing:-0.108px;transform:scaleX(0.9733);transform-origin:0 50%;">Port Cost</div>
<div style="position:absolute;left:158.60px;width:1000px;text-align:right;top:276.90px;height:13px;line-height:13px;white-space:nowrap;font-size:13px;font-weight:400;color:#1f1f1f;">0</div>
<div style="position:absolute;left:815.5px;top:299.80px;height:13px;line-height:13px;white-space:nowrap;font-size:13px;font-weight:400;color:#1f1f1f;letter-spacing:-0.184px;transform:scaleX(0.9573);transform-origin:0 50%;">Canal Cost</div>
<div style="position:absolute;left:158.60px;width:1000px;text-align:right;top:299.80px;height:13px;line-height:13px;white-space:nowrap;font-size:13px;font-weight:400;color:#1f1f1f;">0</div>
<div style="position:absolute;left:815.5px;top:323.70px;height:13px;line-height:13px;white-space:nowrap;font-size:13px;font-weight:400;color:#1f1f1f;letter-spacing:-0.419px;transform:scaleX(0.9219);transform-origin:0 50%;">ILOHC</div>
<div style="position:absolute;left:158.60px;width:1000px;text-align:right;top:323.70px;height:13px;line-height:13px;white-space:nowrap;font-size:13px;font-weight:400;color:#1f1f1f;">0</div>
<div style="position:absolute;left:815.5px;top:347.00px;height:13px;line-height:13px;white-space:nowrap;font-size:13px;font-weight:400;color:#1f1f1f;letter-spacing:-0.124px;transform:scaleX(0.9706);transform-origin:0 50%;">Handling Cost</div>
<div style="position:absolute;left:158.60px;width:1000px;text-align:right;top:347.00px;height:13px;line-height:13px;white-space:nowrap;font-size:13px;font-weight:400;color:#1f1f1f;">0</div>
<div style="position:absolute;left:817.9px;top:379.50px;height:13px;line-height:13px;white-space:nowrap;font-size:13px;font-weight:400;color:#1f1f1f;letter-spacing:-0.112px;transform:scaleX(0.9730);transform-origin:0 50%;">Various</div>
<div style="position:absolute;left:1087px;top:372px;width:72px;height:25px;background:#e0e0e0;border:1px solid #9a9a9a;border-radius:4px;box-sizing:border-box;"></div>
<div style="position:absolute;left:151.54px;width:1000px;text-align:right;top:377.00px;height:14px;line-height:14px;white-space:nowrap;font-size:14px;font-weight:400;color:#1f1f1f;letter-spacing:-0.056px;transform:scaleX(0.9884);transform-origin:100% 50%;">10,000</div>
<div style="position:absolute;left:815.5px;top:403.40px;height:13px;line-height:13px;white-space:nowrap;font-size:13px;font-weight:400;color:#1f1f1f;letter-spacing:-0.140px;transform:scaleX(0.9647);transform-origin:0 50%;">Freight Cost</div>
<div style="position:absolute;left:158.60px;width:1000px;text-align:right;top:403.40px;height:13px;line-height:13px;white-space:nowrap;font-size:13px;font-weight:400;color:#1f1f1f;">0</div>
<div style="position:absolute;left:811.4px;top:430px;width:355.2px;height:1px;background:#b9bdc3;"></div>
<div style="position:absolute;left:-6.70px;width:1000px;text-align:right;top:437.00px;height:12px;line-height:12px;white-space:nowrap;font-size:12px;font-weight:400;color:#1f1f1f;letter-spacing:-0.295px;transform:scaleX(0.9248);transform-origin:100% 50%;">Price (USD)</div>
<div style="position:absolute;left:75.38px;width:1000px;text-align:right;top:437.00px;height:12px;line-height:12px;white-space:nowrap;font-size:12px;font-weight:400;color:#1f1f1f;letter-spacing:-0.223px;transform:scaleX(0.9441);transform-origin:100% 50%;">Qty (MT)</div>
<div style="position:absolute;left:158.30px;width:1000px;text-align:right;top:437.00px;height:12px;line-height:12px;white-space:nowrap;font-size:12px;font-weight:400;color:#1f1f1f;letter-spacing:-0.301px;transform:scaleX(0.9274);transform-origin:100% 50%;">Cost (USD)</div>
<div style="position:absolute;left:817.7px;top:461.40px;height:13px;line-height:13px;white-space:nowrap;font-size:13px;font-weight:400;color:#1f1f1f;letter-spacing:-0.602px;transform:scaleX(0.9017);transform-origin:0 50%;">FO</div>
<div style="position:absolute;left:900px;top:453px;width:94px;height:25px;background:#e0e0e0;border:1px solid #9a9a9a;border-radius:4px;box-sizing:border-box;"></div>
<div style="position:absolute;left:-14.00px;width:1000px;text-align:right;top:458.80px;height:14px;line-height:14px;white-space:nowrap;font-size:14px;font-weight:400;color:#1f1f1f;">0.00</div>
<div style="position:absolute;left:75.42px;width:1000px;text-align:right;top:461.40px;height:13px;line-height:13px;white-space:nowrap;font-size:13px;font-weight:400;color:#1f1f1f;letter-spacing:-0.175px;transform:scaleX(0.9599);transform-origin:100% 50%;">9.517</div>
<div style="position:absolute;left:158.60px;width:1000px;text-align:right;top:461.40px;height:13px;line-height:13px;white-space:nowrap;font-size:13px;font-weight:400;color:#1f1f1f;">0</div>
<div style="position:absolute;left:817.7px;top:494.60px;height:13px;line-height:13px;white-space:nowrap;font-size:13px;font-weight:400;color:#1f1f1f;letter-spacing:-0.435px;transform:scaleX(0.9236);transform-origin:0 50%;">LS MGO</div>
<div style="position:absolute;left:900px;top:486px;width:94px;height:25px;background:#e0e0e0;border:1px solid #9a9a9a;border-radius:4px;box-sizing:border-box;"></div>
<div style="position:absolute;left:-14.00px;width:1000px;text-align:right;top:491.80px;height:14px;line-height:14px;white-space:nowrap;font-size:14px;font-weight:400;color:#1f1f1f;">0.00</div>
<div style="position:absolute;left:75.47px;width:1000px;text-align:right;top:494.60px;height:13px;line-height:13px;white-space:nowrap;font-size:13px;font-weight:400;color:#1f1f1f;letter-spacing:-0.133px;transform:scaleX(0.9700);transform-origin:100% 50%;">38.337</div>
<div style="position:absolute;left:158.60px;width:1000px;text-align:right;top:494.60px;height:13px;line-height:13px;white-space:nowrap;font-size:13px;font-weight:400;color:#1f1f1f;">0</div>
<div style="position:absolute;left:815.5px;top:525.80px;height:13px;line-height:13px;white-space:nowrap;font-size:13px;font-weight:700;color:#1f1f1f;letter-spacing:-0.328px;transform:scaleX(0.9309);transform-origin:0 50%;">Bunker Cost</div>
<div style="position:absolute;left:158.60px;width:1000px;text-align:right;top:525.80px;height:13px;line-height:13px;white-space:nowrap;font-size:13px;font-weight:700;color:#1f1f1f;">0</div>
<div style="position:absolute;left:811.4px;top:553.3px;width:355.2px;height:1px;background:#b9bdc3;"></div>
<div style="position:absolute;left:817.7px;top:567.70px;height:13px;line-height:13px;white-space:nowrap;font-size:13px;font-weight:400;color:#1f1f1f;letter-spacing:-0.502px;transform:scaleX(0.9054);transform-origin:0 50%;">EU ETS</div>
<div style="position:absolute;left:900px;top:560px;width:94px;height:25px;background:#e0e0e0;border:1px solid #9a9a9a;border-radius:4px;box-sizing:border-box;"></div>
<div style="position:absolute;left:-13.80px;width:1000px;text-align:right;top:565.80px;height:14px;line-height:14px;white-space:nowrap;font-size:14px;font-weight:400;color:#6b6b6b;letter-spacing:-0.303px;transform:scaleX(0.9543);transform-origin:100% 50%;">USD</div>
<div style="position:absolute;left:-44.00px;width:1000px;text-align:right;top:565.80px;height:14px;line-height:14px;white-space:nowrap;font-size:14px;font-weight:400;color:#1f1f1f;">0.00</div>
<div style="position:absolute;left:75.45px;width:1000px;text-align:right;top:567.70px;height:13px;line-height:13px;white-space:nowrap;font-size:13px;font-weight:400;color:#1f1f1f;letter-spacing:-0.147px;transform:scaleX(0.9670);transform-origin:100% 50%;">22.894</div>
<div style="position:absolute;left:158.60px;width:1000px;text-align:right;top:567.70px;height:13px;line-height:13px;white-space:nowrap;font-size:13px;font-weight:400;color:#1f1f1f;">0</div>
<div style="position:absolute;left:-142.23px;width:1000px;text-align:right;top:601.00px;height:13px;line-height:13px;white-space:nowrap;font-size:13px;font-weight:400;color:#1f1f1f;letter-spacing:-0.234px;transform:scaleX(0.9543);transform-origin:100% 50%;">EU ETS EU</div>
<div style="position:absolute;left:900px;top:593px;width:94px;height:25px;background:#e0e0e0;border:1px solid #9a9a9a;border-radius:4px;box-sizing:border-box;"></div>
<div style="position:absolute;left:-13.80px;width:1000px;text-align:right;top:598.80px;height:14px;line-height:14px;white-space:nowrap;font-size:14px;font-weight:400;color:#6b6b6b;letter-spacing:-0.303px;transform:scaleX(0.9543);transform-origin:100% 50%;">EUR</div>
<div style="position:absolute;left:-44.00px;width:1000px;text-align:right;top:598.80px;height:14px;line-height:14px;white-space:nowrap;font-size:14px;font-weight:400;color:#1f1f1f;">0.00</div>
<div style="position:absolute;left:75.44px;width:1000px;text-align:right;top:601.00px;height:13px;line-height:13px;white-space:nowrap;font-size:13px;font-weight:400;color:#1f1f1f;letter-spacing:-0.159px;transform:scaleX(0.9637);transform-origin:100% 50%;">0.303</div>
<div style="position:absolute;left:158.60px;width:1000px;text-align:right;top:601.00px;height:13px;line-height:13px;white-space:nowrap;font-size:13px;font-weight:400;color:#1f1f1f;">0</div>
<div style="position:absolute;left:795px;top:624px;width:388px;height:65px;background:#a3d2bc;border-top:1px solid #a6adad;border-bottom:1px solid #a6adad;box-sizing:border-box;"></div>
<div style="position:absolute;left:1007.3px;top:631.00px;height:12px;line-height:12px;white-space:nowrap;font-size:12px;font-weight:400;color:#1f1f1f;letter-spacing:-0.138px;transform:scaleX(0.9675);transform-origin:0 50%;">Lock</div>
<div style="position:absolute;left:870px;top:647px;width:128.5px;height:25px;background:#e0e0e0;border:1px solid #9a9a9a;border-radius:4px;box-sizing:border-box;"></div>
<div style="position:absolute;left:-9.30px;width:1000px;text-align:right;top:652.00px;height:14px;line-height:14px;white-space:nowrap;font-size:14px;font-weight:400;color:#1f1f1f;">1,336</div>
<div style="position:absolute;left:1011px;top:653px;width:16.5px;height:16.5px;border:2px solid #2f3a36;border-radius:2px;box-sizing:border-box;"></div>
<div style="position:absolute;left:157.96px;width:1000px;text-align:right;top:635.00px;height:12px;line-height:12px;white-space:nowrap;font-size:12px;font-weight:700;color:#1f1f1f;letter-spacing:-0.344px;transform:scaleX(0.9152);transform-origin:100% 50%;">Contribution</div>
<div style="position:absolute;left:158.12px;width:1000px;text-align:right;top:655.20px;height:13px;line-height:13px;white-space:nowrap;font-size:13px;font-weight:700;color:#1f1f1f;letter-spacing:-0.184px;transform:scaleX(0.9580);transform-origin:100% 50%;">9,400</div>
<div style="position:absolute;left:-115.61px;width:1000px;text-align:right;top:693.30px;height:13px;line-height:13px;white-space:nowrap;font-size:13px;font-weight:400;color:#1f1f1f;letter-spacing:-0.209px;transform:scaleX(0.9543);transform-origin:100% 50%;">Demurrage Payable</div>
<div style="position:absolute;left:158.60px;width:1000px;text-align:right;top:693.30px;height:13px;line-height:13px;white-space:nowrap;font-size:13px;font-weight:400;color:#1f1f1f;">0</div>
<div style="position:absolute;left:-109.39px;width:1000px;text-align:right;top:716.50px;height:13px;line-height:13px;white-space:nowrap;font-size:13px;font-weight:400;color:#1f1f1f;letter-spacing:-0.191px;transform:scaleX(0.9543);transform-origin:100% 50%;">Freight Bonus</div>
<div style="position:absolute;left:158.60px;width:1000px;text-align:right;top:716.50px;height:13px;line-height:13px;white-space:nowrap;font-size:13px;font-weight:400;color:#1f1f1f;">0</div>
<div style="position:absolute;left:815.5px;top:740.30px;height:13px;line-height:13px;white-space:nowrap;font-size:13px;font-weight:400;color:#1f1f1f;letter-spacing:-0.200px;transform:scaleX(0.9543);transform-origin:0 50%;">Other</div>
<div style="position:absolute;left:158.60px;width:1000px;text-align:right;top:740.30px;height:13px;line-height:13px;white-space:nowrap;font-size:13px;font-weight:400;color:#1f1f1f;">0</div>
<div style="position:absolute;left:795px;top:759px;width:388px;height:57px;background:#a3d2bc;border-top:1px solid #a6adad;border-bottom:1px solid #a6adad;box-sizing:border-box;"></div>
<div style="position:absolute;left:157.95px;width:1000px;text-align:right;top:766.00px;height:12px;line-height:12px;white-space:nowrap;font-size:12px;font-weight:700;color:#1f1f1f;letter-spacing:-0.347px;transform:scaleX(0.9161);transform-origin:100% 50%;">Result</div>
<div style="position:absolute;left:1055px;top:782px;width:103.5px;height:25px;background:#e0e0e0;border:1px solid #9a9a9a;border-radius:4px;box-sizing:border-box;"></div>
<div style="position:absolute;left:151.44px;width:1000px;text-align:right;top:788.00px;height:14px;line-height:14px;white-space:nowrap;font-size:14px;font-weight:400;color:#1f1f1f;letter-spacing:-0.060px;transform:scaleX(0.9872);transform-origin:100% 50%;">9,400</div>
<div style="position:absolute;left:-117.78px;width:1000px;text-align:right;top:790.70px;height:13px;line-height:13px;white-space:nowrap;font-size:13px;font-weight:700;color:#1f1f1f;letter-spacing:-0.283px;transform:scaleX(0.9267);transform-origin:100% 50%;">Profit / Day</div>
<div style="position:absolute;left:935.9px;top:790.70px;height:13px;line-height:13px;white-space:nowrap;font-size:13px;font-weight:700;color:#1f1f1f;">1,336</div>
<div style="position:absolute;left:4px;top:616px;width:388px;height:240.5px;border-radius:8px;overflow:hidden;"><svg width="388" height="240.5"><rect width="388" height="240.5" fill="#bed2d6"/><polygon points="251.0,0.0 248.0,8.0 242.0,18.0 234.0,30.0 230.0,36.0 224.0,48.0 216.0,54.0 202.0,60.0 191.0,70.0 179.0,84.0 169.0,95.0 166.0,106.0 164.0,119.0 163.0,134.0 165.0,148.0 170.0,160.0 177.0,172.0 186.0,181.0 196.0,184.0 206.0,183.0 214.0,179.0 224.0,170.0 232.0,160.0 236.0,174.0 244.0,184.0 254.0,196.0 388.0,196.0 388.0,0.0" fill="#dbdbd6"/><path d="M235 142 L237 159 L240 176" fill="none" stroke="#bed2d6" stroke-width="2"/><polygon points="52.0,173.0 75.0,171.0 66.0,190.0 88.0,192.0 89.0,198.0 81.0,214.0 72.0,222.0 78.0,227.0 89.0,232.0 93.0,241.0 46.0,241.0 44.0,230.0 40.0,218.0 43.0,206.0 46.0,195.0 49.0,184.0" fill="#dbdbd6"/><polygon points="228.0,192.0 234.0,200.0 240.0,210.0 246.0,218.0 258.0,240.0 204.0,241.0 204.0,224.0 210.0,214.0 218.0,207.0 224.0,198.0" fill="#dbdbd6"/><polygon points="29.5,185.0 36.0,175.0 39.0,179.0 34.0,189.0" fill="#dbdbd6"/><polygon points="34.0,196.0 40.0,193.0 44.0,200.0 38.0,202.0" fill="#dbdbd6"/><polygon points="72.0,161.0 77.0,156.0 81.0,163.0 75.0,166.0" fill="#dbdbd6"/><polygon points="92.0,133.0 96.0,126.0 100.0,124.0 98.0,136.0 95.0,141.0" fill="#dbdbd6"/><path d="M201 74 L211 89 L228 96 L246 89 M211 89 L201 114 L218 129 L214 154 L234 164 M186 134 L201 144 L214 154 M189 149 L191 179 M226 114 L246 119" fill="none" stroke="#c9c9c3" stroke-width="0.8"/><path d="M182 84 L201 76 M174 106 L194 98 L201 100 M176 146 L184 134 L188 128 M205 54 L211 66" fill="none" stroke="#bed2d6" stroke-width="1.5"/><path d="M63.900000000000006 93.60000000000002 L388 93.60000000000002 M63.900000000000006 93.60000000000002 L63.900000000000006 171 L53.2 215.79999999999995 L68 241" fill="none" stroke="#5c8ca3" stroke-width="2" stroke-dasharray="5 7"/><polyline points="224.7,56.8 219.7,52.3 190.8,67.7 178.9,68.7 157.0,93.0 156.5,141.8 164.0,154.4 171.0,167.0 183.7,180.2 192.0,184.4 204.6,186.5 211.5,183.7 231.0,162.8 231.5,142.0" fill="none" stroke="#d5a43a" stroke-width="2.6" stroke-linejoin="round"/><polyline points="169.7,130.0 166.2,138.4 164.8,146.0 166.0,155.8 172.5,162.8" fill="none" stroke="#d5a43a" stroke-width="2.6" stroke-linejoin="round"/><text x="183.7" y="117.89999999999998" font-family="Liberation Sans" font-size="11" font-weight="400" fill="#56667a" letter-spacing="0.9" stroke="#56667a" stroke-width="0.25">NORWAY</text><text x="197" y="236" font-family="Liberation Sans" font-size="10.5" font-weight="400" fill="#56667a" letter-spacing="0.9" stroke="#56667a" stroke-width="0.25">DENMARK</text><rect x="228" y="227" width="60" height="14" fill="#dfe3e4"/><text x="229" y="237" font-family="Liberation Sans" font-size="10" fill="#3a76a0">Leaflet</text><path d="M218.2 43.299999999999955 A9.5 9.5 0 1 1 237.2 43.299999999999955 Q236.2 49.299999999999955 227.7 56.799999999999955 Q219.2 49.299999999999955 218.2 43.299999999999955 Z" fill="#3f4345"/><text x="227.7" y="47.59999999999995" font-family="Liberation Sans" font-size="12" fill="#e2e2e2" text-anchor="middle">3</text><path d="M160.2 116.70000000000005 A9.5 9.5 0 1 1 179.2 116.70000000000005 Q178.2 122.70000000000005 169.7 130.20000000000005 Q161.2 122.70000000000005 160.2 116.70000000000005 Z" fill="#3f4345"/><text x="169.7" y="121.00000000000004" font-family="Liberation Sans" font-size="12" fill="#e2e2e2" text-anchor="middle">1</text><path d="M165.1 149.5 A9.5 9.5 0 1 1 184.1 149.5 Q183.1 155.5 174.6 163.0 Q166.1 155.5 165.1 149.5 Z" fill="#3f4345"/><text x="174.6" y="153.8" font-family="Liberation Sans" font-size="12" fill="#e2e2e2" text-anchor="middle">2</text><path d="M222.3 128.60000000000002 A9.5 9.5 0 1 1 241.3 128.60000000000002 Q240.3 134.60000000000002 231.8 142.10000000000002 Q223.3 134.60000000000002 222.3 128.60000000000002 Z" fill="#3f4345"/><text x="231.8" y="132.90000000000003" font-family="Liberation Sans" font-size="12" fill="#e2e2e2" text-anchor="middle">B</text></svg></div>
<div style="position:absolute;left:14.5px;top:626.4px;width:33px;height:63px;background:#e4e4e4;border:2px solid #a9b2b4;border-radius:4px;box-sizing:border-box;"></div>
<div style="position:absolute;left:16.5px;top:657px;width:29px;height:1px;background:#b8b8b8;"></div>
<svg style="position:absolute;left:23px;top:637px;" width="16" height="16" viewBox="0 0 16 16"><path d="M8 1.5 V14.5 M1.5 8 H14.5" stroke="#111" stroke-width="2.3"/></svg>
<svg style="position:absolute;left:23px;top:668px;" width="16" height="16" viewBox="0 0 16 16"><path d="M1.5 8 H14.5" stroke="#111" stroke-width="2.3"/></svg>
<div style="position:absolute;left:14.5px;top:700.7px;width:33px;height:32.5px;background:#e4e4e4;border:2px solid #b2b2b2;box-sizing:border-box;"></div>
<svg style="position:absolute;left:21.5px;top:707.5px;" width="20" height="20" viewBox="0 0 20 20"><path d="M2.5 7 V2.5 H7 M13 2.5 H17.5 V7 M17.5 13 V17.5 H13 M7 17.5 H2.5 V13" fill="none" stroke="#222" stroke-width="2.2"/></svg>
<div style="position:absolute;left:250px;top:580px;width:600px;height:405px;background:#ffffff;border-radius:4px;box-shadow:0px 11px 15px -7px rgba(0,0,0,0.2),0px 24px 38px 3px rgba(0,0,0,0.14),0px 9px 46px 8px rgba(0,0,0,0.12);"></div>
<div style="position:absolute;left:274.3px;top:598.20px;height:20px;line-height:20px;white-space:nowrap;font-size:20px;font-weight:400;color:#212121;letter-spacing:0.021px;transform:scaleX(1.0035);transform-origin:0 50%;">Deviation Calculation</div>
<div style="position:absolute;left:480px;top:599px;width:118.5px;height:20px;border:1px solid #7aa3dc;border-radius:3px;box-sizing:border-box;"></div>
<div style="position:absolute;left:490.6px;top:602.20px;height:12px;line-height:12px;white-space:nowrap;font-size:12px;font-weight:400;color:#1a5fc8;letter-spacing:-0.191px;transform:scaleX(0.9523);transform-origin:0 50%;">Open Direct Voyage</div>
<svg style="position:absolute;left:815px;top:600.8px;" width="13.5" height="13" viewBox="0 0 13.5 13"><path d="M1 1 L12.5 12 M12.5 1 L1 12" stroke="#666" stroke-width="1.7"/></svg>
<div style="position:absolute;left:-449.98px;width:1000px;text-align:right;top:645.70px;height:13px;line-height:13px;white-space:nowrap;font-size:13px;font-weight:700;color:#212121;letter-spacing:-0.383px;transform:scaleX(0.9264);transform-origin:100% 50%;">Loaded</div>
<div style="position:absolute;left:-316.49px;width:1000px;text-align:right;top:645.70px;height:13px;line-height:13px;white-space:nowrap;font-size:13px;font-weight:700;color:#212121;letter-spacing:-0.287px;transform:scaleX(0.9307);transform-origin:100% 50%;">Direct</div>
<div style="position:absolute;left:-191.27px;width:1000px;text-align:right;top:645.70px;height:13px;line-height:13px;white-space:nowrap;font-size:13px;font-weight:700;color:#212121;letter-spacing:-0.268px;transform:scaleX(0.9405);transform-origin:100% 50%;">Variance</div>
<div style="position:absolute;left:274px;top:670.0px;width:552px;height:1px;background:#e0e0e0;"></div>
<div style="position:absolute;left:274px;top:700.5px;width:552px;height:1px;background:#e0e0e0;"></div>
<div style="position:absolute;left:274px;top:731.0px;width:552px;height:1px;background:#e0e0e0;"></div>
<div style="position:absolute;left:274px;top:761.5px;width:552px;height:1px;background:#e0e0e0;"></div>
<div style="position:absolute;left:274px;top:792.0px;width:552px;height:1px;background:#e0e0e0;"></div>
<div style="position:absolute;left:274px;top:822.5px;width:552px;height:1px;background:#e0e0e0;"></div>
<div style="position:absolute;left:274px;top:853.0px;width:552px;height:1px;background:#e0e0e0;"></div>
<div style="position:absolute;left:274px;top:883.5px;width:552px;height:1px;background:#e0e0e0;"></div>
<div style="position:absolute;left:274px;top:914.0px;width:552px;height:1px;background:#e0e0e0;"></div>
<div style="position:absolute;left:289.7px;top:678.00px;height:13px;line-height:13px;white-space:nowrap;font-size:13px;font-weight:400;color:#212121;letter-spacing:-0.093px;transform:scaleX(0.9772);transform-origin:0 50%;">Miles</div>
<div style="position:absolute;left:-449.71px;width:1000px;text-align:right;top:678.00px;height:13px;line-height:13px;white-space:nowrap;font-size:13px;font-weight:400;color:#212121;letter-spacing:-0.106px;transform:scaleX(0.9762);transform-origin:100% 50%;">913.95</div>
<div style="position:absolute;left:-316.31px;width:1000px;text-align:right;top:678.00px;height:13px;line-height:13px;white-space:nowrap;font-size:13px;font-weight:400;color:#212121;letter-spacing:-0.106px;transform:scaleX(0.9762);transform-origin:100% 50%;">695.20</div>
<div style="position:absolute;left:-191.14px;width:1000px;text-align:right;top:678.00px;height:13px;line-height:13px;white-space:nowrap;font-size:13px;font-weight:400;color:#212121;letter-spacing:-0.140px;transform:scaleX(0.9685);transform-origin:100% 50%;">218.75</div>
<div style="position:absolute;left:289.7px;top:708.50px;height:13px;line-height:13px;white-space:nowrap;font-size:13px;font-weight:400;color:#212121;letter-spacing:-0.233px;transform:scaleX(0.9463);transform-origin:0 50%;">Days at Sea</div>
<div style="position:absolute;left:-449.60px;width:1000px;text-align:right;top:708.50px;height:13px;line-height:13px;white-space:nowrap;font-size:13px;font-weight:400;color:#212121;">4.00</div>
<div style="position:absolute;left:-316.20px;width:1000px;text-align:right;top:708.50px;height:13px;line-height:13px;white-space:nowrap;font-size:13px;font-weight:400;color:#212121;">3.04</div>
<div style="position:absolute;left:-191.00px;width:1000px;text-align:right;top:708.50px;height:13px;line-height:13px;white-space:nowrap;font-size:13px;font-weight:400;color:#212121;">0.96</div>
<div style="position:absolute;left:289.7px;top:739.00px;height:13px;line-height:13px;white-space:nowrap;font-size:13px;font-weight:400;color:#212121;letter-spacing:-0.146px;transform:scaleX(0.9630);transform-origin:0 50%;">Days in Port</div>
<div style="position:absolute;left:-449.60px;width:1000px;text-align:right;top:739.00px;height:13px;line-height:13px;white-space:nowrap;font-size:13px;font-weight:400;color:#212121;">3.04</div>
<div style="position:absolute;left:-316.20px;width:1000px;text-align:right;top:739.00px;height:13px;line-height:13px;white-space:nowrap;font-size:13px;font-weight:400;color:#212121;">0.00</div>
<div style="position:absolute;left:-191.00px;width:1000px;text-align:right;top:739.00px;height:13px;line-height:13px;white-space:nowrap;font-size:13px;font-weight:400;color:#212121;">3.04</div>
<div style="position:absolute;left:289.7px;top:769.50px;height:13px;line-height:13px;white-space:nowrap;font-size:13px;font-weight:400;color:#212121;letter-spacing:-0.206px;transform:scaleX(0.9543);transform-origin:0 50%;">Canal Days</div>
<div style="position:absolute;left:-449.60px;width:1000px;text-align:right;top:769.50px;height:13px;line-height:13px;white-space:nowrap;font-size:13px;font-weight:400;color:#212121;">0.00</div>
<div style="position:absolute;left:-316.20px;width:1000px;text-align:right;top:769.50px;height:13px;line-height:13px;white-space:nowrap;font-size:13px;font-weight:400;color:#212121;">0.00</div>
<div style="position:absolute;left:-191.00px;width:1000px;text-align:right;top:769.50px;height:13px;line-height:13px;white-space:nowrap;font-size:13px;font-weight:400;color:#212121;">0.00</div>
<div style="position:absolute;left:289.7px;top:800.00px;height:13px;line-height:13px;white-space:nowrap;font-size:13px;font-weight:400;color:#212121;letter-spacing:-0.133px;transform:scaleX(0.9672);transform-origin:0 50%;">Days Total</div>
<div style="position:absolute;left:-449.60px;width:1000px;text-align:right;top:800.00px;height:13px;line-height:13px;white-space:nowrap;font-size:13px;font-weight:400;color:#212121;">7.03</div>
<div style="position:absolute;left:-316.20px;width:1000px;text-align:right;top:800.00px;height:13px;line-height:13px;white-space:nowrap;font-size:13px;font-weight:400;color:#212121;">3.04</div>
<div style="position:absolute;left:-191.00px;width:1000px;text-align:right;top:800.00px;height:13px;line-height:13px;white-space:nowrap;font-size:13px;font-weight:400;color:#212121;">3.99</div>
<div style="position:absolute;left:289.7px;top:830.50px;height:13px;line-height:13px;white-space:nowrap;font-size:13px;font-weight:700;color:#212121;letter-spacing:-0.319px;transform:scaleX(0.9292);transform-origin:0 50%;">TC Equivalent</div>
<div style="position:absolute;left:-449.68px;width:1000px;text-align:right;top:830.50px;height:13px;line-height:13px;white-space:nowrap;font-size:13px;font-weight:700;color:#212121;letter-spacing:-0.081px;transform:scaleX(0.9808);transform-origin:100% 50%;">1,336.32</div>
<div style="position:absolute;left:-316.24px;width:1000px;text-align:right;top:830.50px;height:13px;line-height:13px;white-space:nowrap;font-size:13px;font-weight:700;color:#212121;letter-spacing:-0.037px;transform:scaleX(0.9908);transform-origin:100% 50%;">-3,287.85</div>
<div style="position:absolute;left:-191.08px;width:1000px;text-align:right;top:830.50px;height:13px;line-height:13px;white-space:nowrap;font-size:13px;font-weight:700;color:#212121;letter-spacing:-0.081px;transform:scaleX(0.9808);transform-origin:100% 50%;">4,624.16</div>
<div style="position:absolute;left:289.7px;top:861.00px;height:13px;line-height:13px;white-space:nowrap;font-size:13px;font-weight:400;color:#212121;letter-spacing:-0.295px;transform:scaleX(0.9366);transform-origin:0 50%;">FO Cost</div>
<div style="position:absolute;left:-449.60px;width:1000px;text-align:right;top:861.00px;height:13px;line-height:13px;white-space:nowrap;font-size:13px;font-weight:400;color:#212121;">0.00</div>
<div style="position:absolute;left:-316.20px;width:1000px;text-align:right;top:861.00px;height:13px;line-height:13px;white-space:nowrap;font-size:13px;font-weight:400;color:#212121;">0.00</div>
<div style="position:absolute;left:-191.00px;width:1000px;text-align:right;top:861.00px;height:13px;line-height:13px;white-space:nowrap;font-size:13px;font-weight:400;color:#212121;">0.00</div>
<div style="position:absolute;left:289.7px;top:891.50px;height:13px;line-height:13px;white-space:nowrap;font-size:13px;font-weight:400;color:#212121;letter-spacing:-0.293px;transform:scaleX(0.9408);transform-origin:0 50%;">LS MGO Cost</div>
<div style="position:absolute;left:-449.60px;width:1000px;text-align:right;top:891.50px;height:13px;line-height:13px;white-space:nowrap;font-size:13px;font-weight:400;color:#212121;">0.00</div>
<div style="position:absolute;left:-316.20px;width:1000px;text-align:right;top:891.50px;height:13px;line-height:13px;white-space:nowrap;font-size:13px;font-weight:400;color:#212121;">0.00</div>
<div style="position:absolute;left:-191.00px;width:1000px;text-align:right;top:891.50px;height:13px;line-height:13px;white-space:nowrap;font-size:13px;font-weight:400;color:#212121;">0.00</div>
<div style="position:absolute;left:778px;top:943px;width:64px;height:34px;background:#0062e6;border-radius:4px;box-shadow:0 1px 3px rgba(0,0,0,0.2);"></div>
<div style="position:absolute;left:309.50px;width:1000px;text-align:center;top:952.50px;height:13px;line-height:13px;white-space:nowrap;font-size:13px;font-weight:400;color:#ffffff;letter-spacing:-0.251px;transform:scaleX(0.9439);transform-origin:50% 50%;">Close</div>
</div></body></html>
